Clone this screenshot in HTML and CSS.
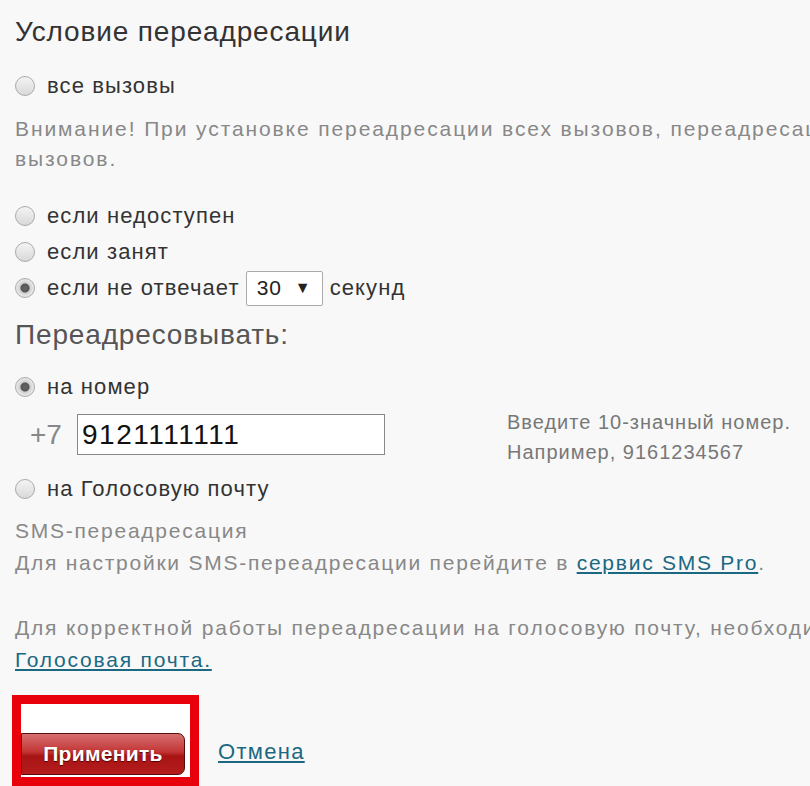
FILE: index.html
```html
<!DOCTYPE html>
<html lang="ru">

<head>
  <meta charset="UTF-8">
  <title>Переадресация</title>
  <link rel="stylesheet" href="styles.css">
</head>

<body>

  <div class="page">
    <h2 class="title">Условие переадресации</h2>
    <label class="option"><input type="radio" name="cond"> все вызовы</label>
    <p class="note">Внимание! При установке переадресации всех вызовов, переадресация условных<br>вызовов.</p>

    <div class="options">
      <label class="option"><input type="radio" name="cond"> если недоступен</label>
      <label class="option"><input type="radio" name="cond"> если занят</label>
      <label class="option"><input type="radio" name="cond" checked> если не отвечает
        <span class="select"><span>30</span><span class="arrow">&#9660;</span></span> секунд</label>
    </div>

    <h2 class="title title-second">Переадресовывать:</h2>
    <label class="option"><input type="radio" name="target" checked> на номер</label>
    <div class="phone-row">
      <span class="prefix">+7</span>
      <input class="phone" type="text" value="9121111111">
      <div class="hint">Введите 10-значный номер.<br>Например, 9161234567</div>
    </div>
    <label class="option"><input type="radio" name="target"> на Голосовую почту</label>

    <div class="sms">
      <div>SMS-переадресация</div>
      <div>Для настройки SMS-переадресации перейдите в <a href="#">сервис SMS Pro</a>.</div>
    </div>

    <p class="note note-voice">Для корректной работы переадресации на голосовую почту, необходимо подключить услугу<br><a href="#">Голосовая почта.</a></p>

    <div class="actions">
      <div class="highlight">
        <button class="apply">Применить</button>
      </div>
      <a href="#" class="cancel">Отмена</a>
    </div>
  </div>

</body>

</html>
```

FILE: styles.css
```css
body {
  margin: 0;
  background-color: #f8f8f8;
  font-family: 'Liberation Sans', Arial, sans-serif;
  overflow: hidden;
}

.page {
  width: 1200px;
  padding: 14px 0 0 15px;
}

.title {
  margin: 0;
  height: 36px;
  line-height: 36px;
  font-size: 28px;
  font-weight: normal;
  color: #333;
  letter-spacing: 0.85px;
}

.title-second {
  margin-top: 11px;
  color: #555;
}

.option {
  display: flex;
  align-items: center;
  height: 36px;
  font-size: 22px;
  color: #333;
  letter-spacing: 1.1px;
}

.option input {
  appearance: none;
  width: 20px;
  height: 20px;
  margin: 0 12px 0 0;
  border: 1px solid #aaa;
  border-radius: 50%;
  background: linear-gradient(#f4f4f4, #d9d9d9);
  box-sizing: border-box;
}

.option input:checked {
  background: radial-gradient(circle, #666 0, #555 4px, #ccc 5px, #e6e6e6 8px);
}

.note {
  margin: 10px 0 0;
  font-size: 21px;
  line-height: 30px;
  color: #888;
  letter-spacing: 1.9px;
  white-space: nowrap;
}

.options {
  margin-top: 24px;
}

.select {
  display: inline-flex;
  align-items: center;
  justify-content: space-between;
  width: 77px;
  height: 35px;
  margin: 0 7px 0 6px;
  padding: 0 10px;
  box-sizing: border-box;
  border: 1px solid #aaa;
  border-radius: 2px;
  background: #fff;
  font-size: 21px;
  color: #222;
  letter-spacing: 1px;
}

.select .arrow {
  font-size: 16px;
}

.title + .option {
  margin-top: 18px;
}

.title-second + .option {
  margin-top: 16px;
}

.phone-row {
  display: flex;
  align-items: center;
  height: 41px;
  margin-top: 9px;
}

.prefix {
  width: 62px;
  padding-left: 15px;
  box-sizing: border-box;
  font-size: 28px;
  color: #888;
}

.phone {
  width: 308px;
  height: 41px;
  box-sizing: border-box;
  border: 1px solid #888;
  background: #fff;
  padding: 0 4px;
  font-family: 'Liberation Sans', Arial, sans-serif;
  font-size: 28px;
  color: #111;
  letter-spacing: 1.5px;
}

.hint {
  margin: 4px 0 0 122px;
  font-size: 20px;
  line-height: 30px;
  color: #777;
  letter-spacing: 1px;
  white-space: nowrap;
}

.phone-row + .option {
  margin-top: 16px;
}

.sms {
  margin-top: 8px;
  font-size: 21px;
  line-height: 32px;
  color: #888;
  letter-spacing: 1.75px;
}

a {
  color: #1a6882;
}

.note-voice {
  margin-top: 33px;
  line-height: 32px;
  letter-spacing: 1.8px;
}

.actions {
  display: flex;
  align-items: center;
  margin: 19px 0 0 -3px;
}

.highlight {
  width: 187px;
  height: 91px;
  box-sizing: border-box;
  border: 9px solid #e8000a;
  background: #fff;
  padding-top: 29px;
}

.apply {
  display: block;
  width: 164px;
  height: 42px;
  border: 1px solid #5a0a0a;
  border-radius: 0 7px 7px 0;
  background: linear-gradient(#d67070 0, #c23434 45%, #a81414 55%, #b51c1c 100%);
  color: #fff;
  font-family: 'Liberation Sans', Arial, sans-serif;
  font-size: 21px;
  font-weight: bold;
  letter-spacing: 0.3px;
  text-shadow: 0 1px 1px #500;
  cursor: pointer;
}

.cancel {
  margin: 22px 0 0 19px;
  font-size: 22px;
  letter-spacing: 1.3px;
}
```
